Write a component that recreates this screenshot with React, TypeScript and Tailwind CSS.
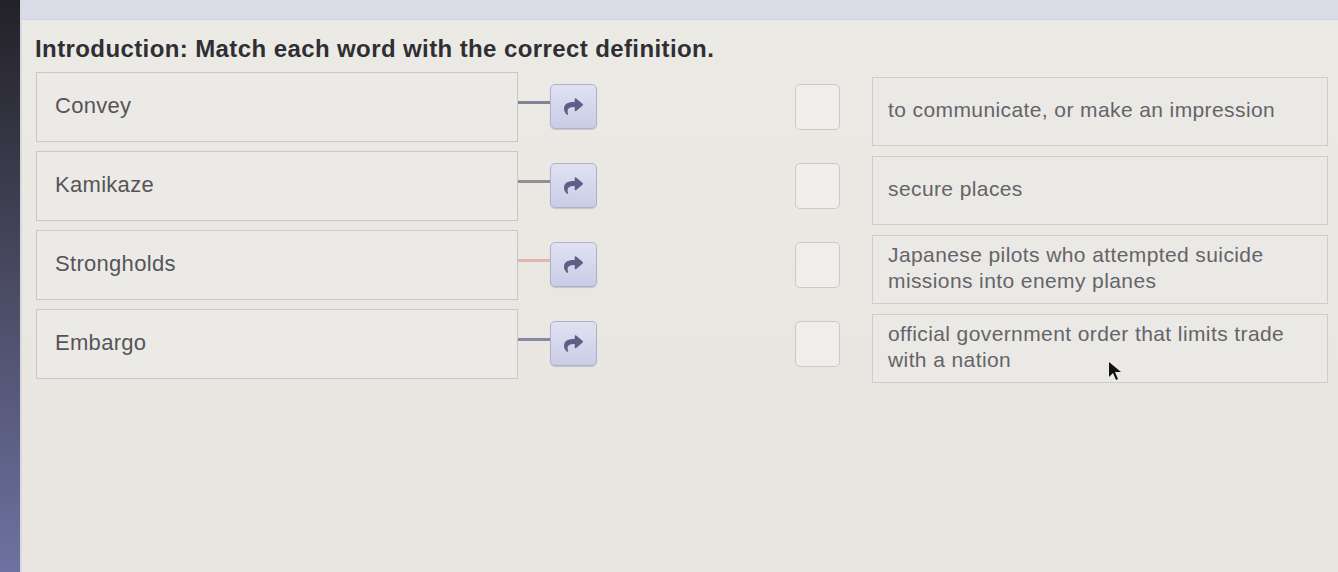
import React from "react";
import { FaShare } from "react-icons/fa";

type Row = { word: string; def: string[]; line: string };

const rows: Row[] = [
  { word: "Convey", def: ["to communicate, or make an impression"], line: "bg-[#7f8498]" },
  { word: "Kamikaze", def: ["secure places"], line: "bg-[#8e9196]" },
  { word: "Strongholds", def: ["Japanese pilots who attempted suicide", "missions into enemy planes"], line: "bg-[#e3b5b3]" },
  { word: "Embargo", def: ["official government order that limits trade", "with a nation"], line: "bg-[#868aa8]" },
];

export default function App() {
  return (
    <div className="w-[1338px] h-[572px] flex overflow-hidden font-['Liberation_Sans',Arial,sans-serif]">
      <div className="w-[20px] shrink-0 bg-gradient-to-b from-[#232229] via-[#4a4b64] to-[#6d72a1]" />
      <div className="w-[2px] shrink-0 bg-[#d9d8de]" />
      <div className="flex-1 flex flex-col bg-gradient-to-b from-[#eceae5] to-[#e9e5e0]">
        <div className="h-[20px] shrink-0 bg-[#d9dbe7] border-b border-[#cfd1da]" />
        <div className="pl-[13px] pt-[14px]">
          <h1 className="text-[24px] leading-[29px] font-bold text-[#2f2f33] tracking-[0.4px]">
            Introduction: Match each word with the correct definition.
          </h1>
          <div className="mt-[9px] flex flex-col gap-[9px]">
            {rows.map((r) => (
              <div key={r.word} className="flex items-start h-[70px]">
                <div className="w-[482px] h-[70px] ml-[1px] flex items-center pl-[18px] pb-[4px] bg-[#eceae7] border border-[#c9c8c5] text-[22px] tracking-[0.3px] text-[#555558]">
                  {r.word}
                </div>
                <div className={`w-[32px] h-[3px] mt-[29px] ${r.line}`} />
                <div className="w-[47px] h-[45px] mt-[12px] flex items-center justify-center rounded-[5px] border border-[#aeb1cc] bg-gradient-to-b from-[#e0e2f3] to-[#c9cce6] shadow-[0_1px_1px_rgba(0,0,0,0.15)]">
                  <FaShare className="w-[19px] h-[19px] text-[#5a6186]" />
                </div>
                <div className="w-[198px]" />
                <div className="w-[45px] h-[46px] mt-[12px] rounded-[5px] border border-[#c9c9c8] bg-[#efeeeb]" />
                <div className="w-[32px]" />
                <div className="w-[456px] h-[69px] mt-[5px] flex flex-col justify-center pl-[15px] pb-[3px] bg-[#ebe9e6] border border-[#cfcdca] text-[21px] leading-[26px] text-[#646468] tracking-[0.4px]">
                  {r.def.map((d) => (
                    <div key={d}>{d}</div>
                  ))}
                </div>
              </div>
            ))}
          </div>
        </div>
      </div>
      <svg
        className="absolute left-[1107px] top-[361px]"
        width="16"
        height="20"
        viewBox="0 0 16 20"
      >
        <path d="M2 1 L2 16 L6 12 L9 19 L11 18 L8 11 L14 11 Z" fill="#111" />
      </svg>
    </div>
  );
}
